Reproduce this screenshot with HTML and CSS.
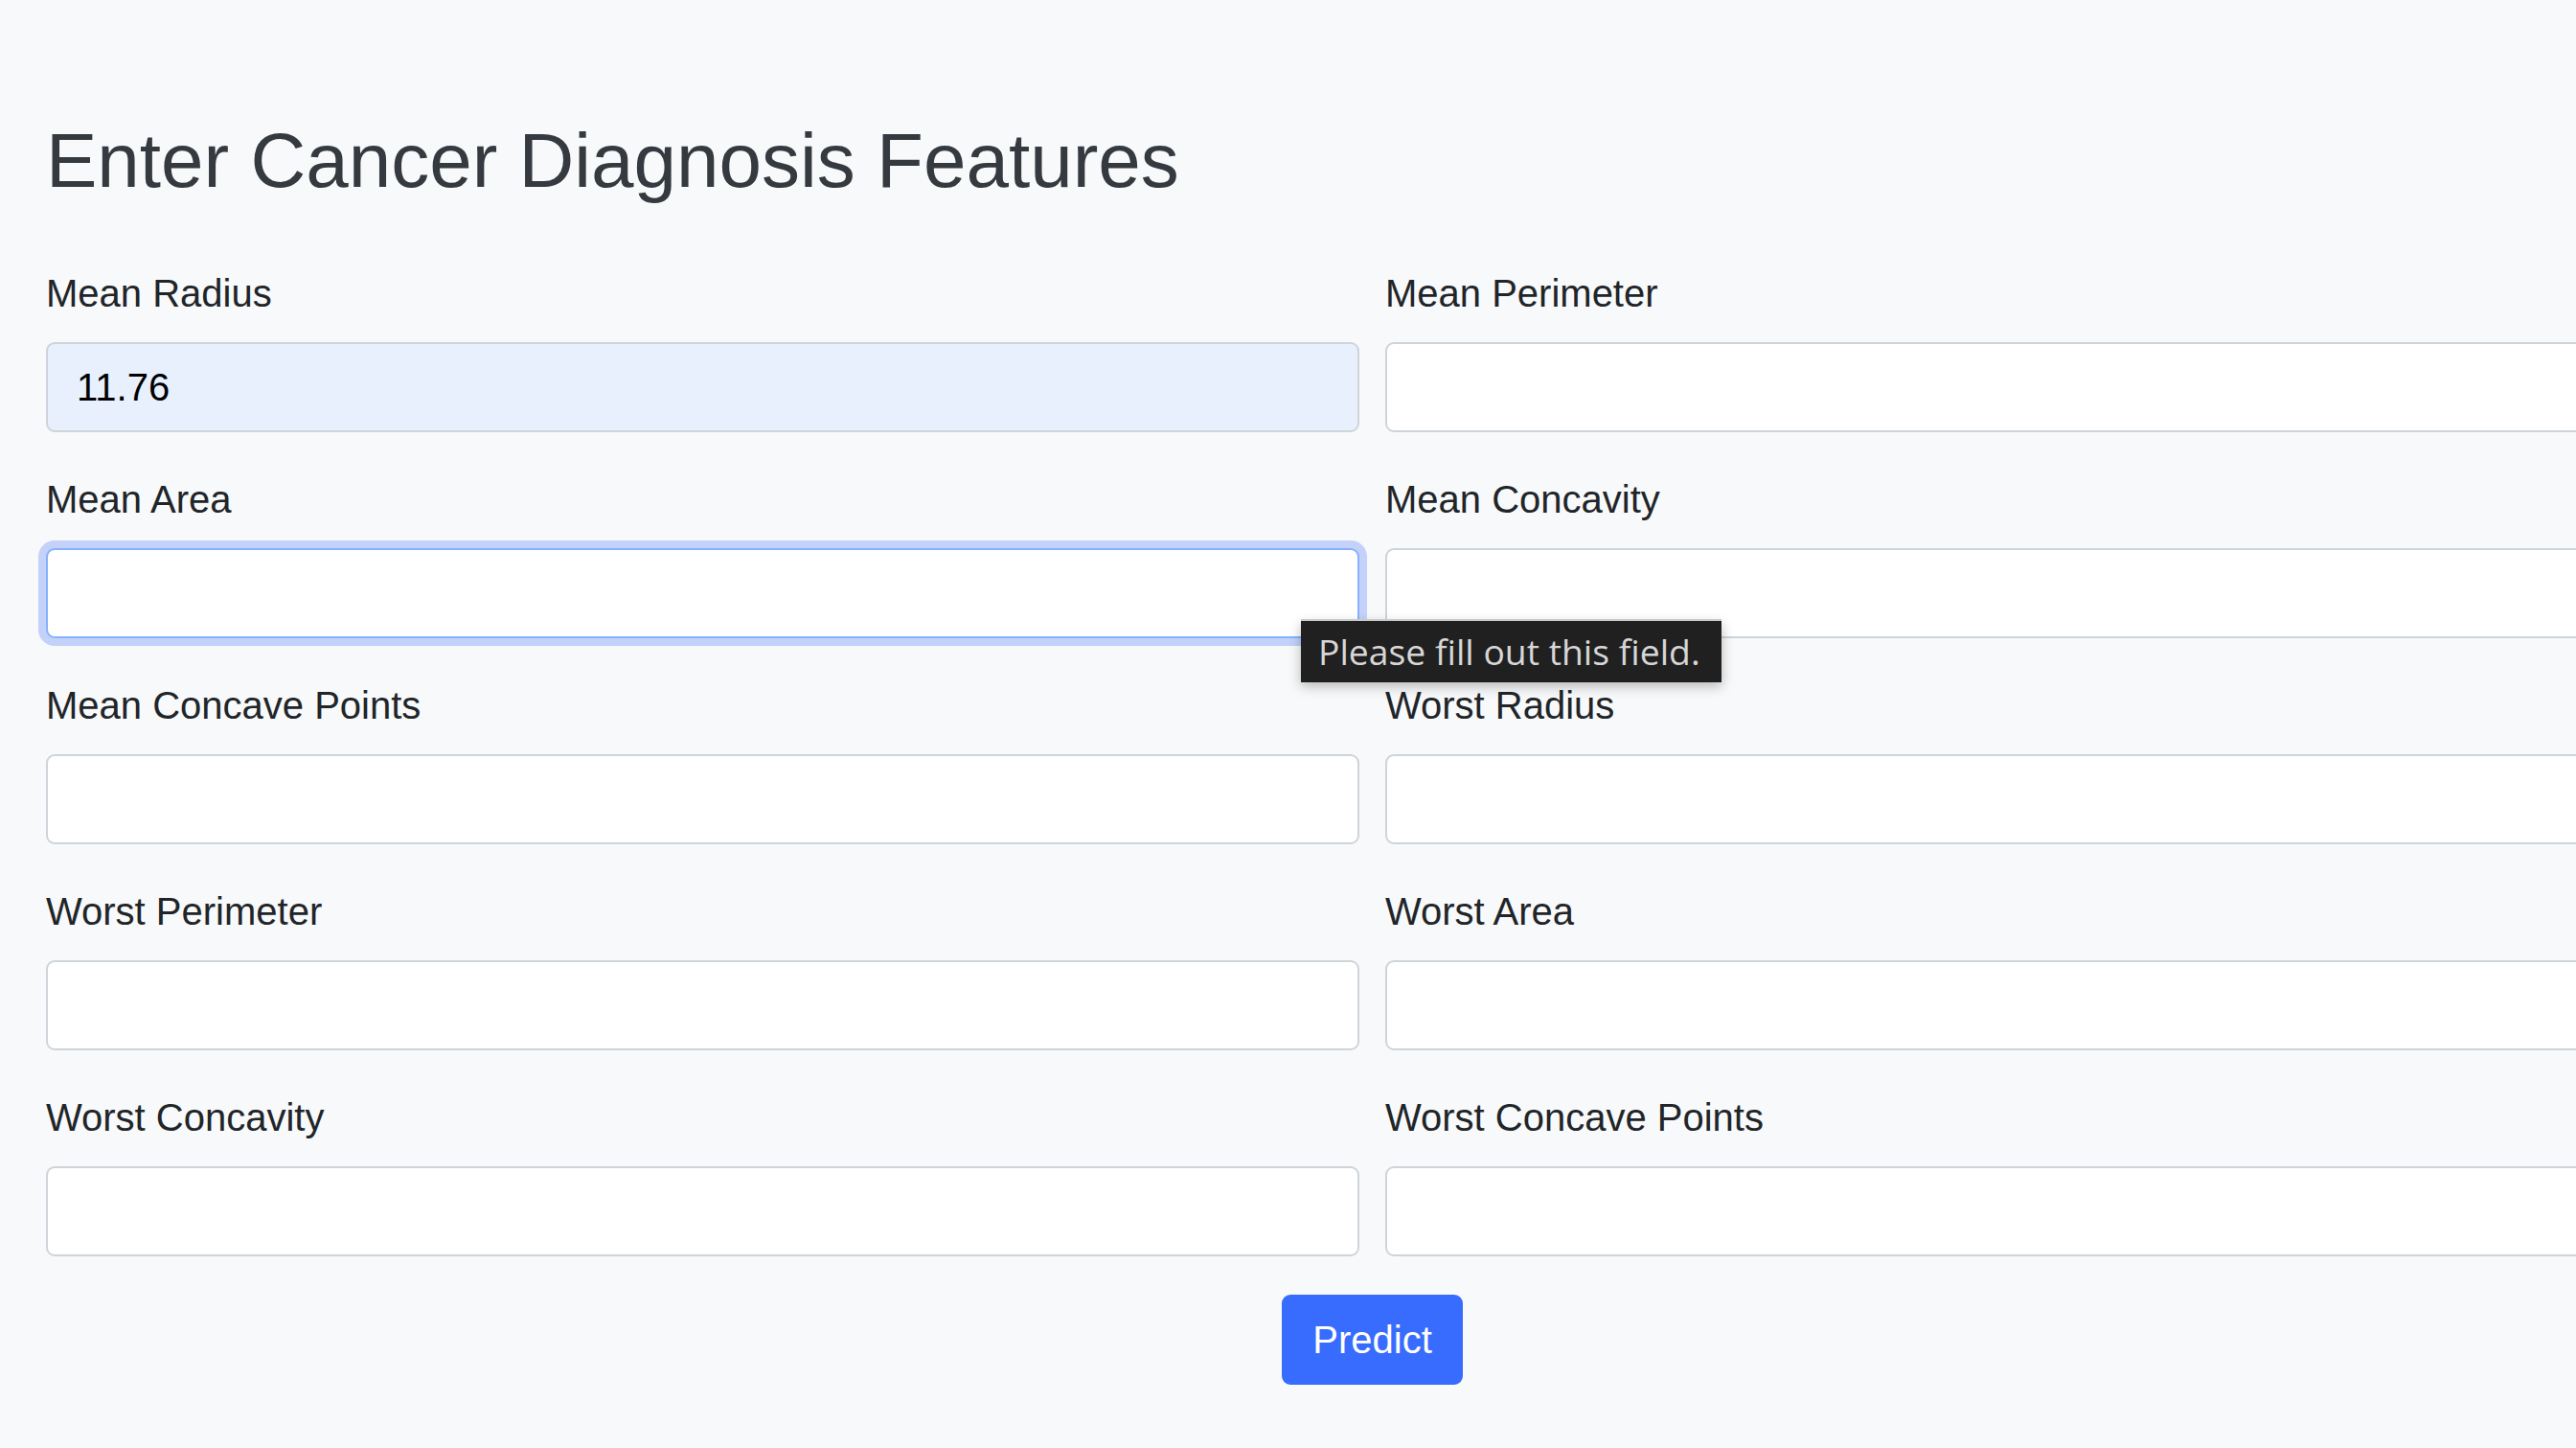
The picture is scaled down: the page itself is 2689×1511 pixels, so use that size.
FILE: index.html
```html
<!DOCTYPE html>
<html lang="en">
<head>
<meta charset="utf-8">
<title>Cancer Diagnosis</title>
<link rel="stylesheet" href="styles.css">
</head>
<body>
<main class="page">
  <h2 class="title">Enter Cancer Diagnosis Features</h2>
  <form class="form">
    <div class="grid">
      <div class="field">
        <label class="label" for="mean_radius">Mean Radius</label>
        <input class="input input-autofill" id="mean_radius" type="text" value="11.76">
      </div>
      <div class="field">
        <label class="label" for="mean_perimeter">Mean Perimeter</label>
        <input class="input" id="mean_perimeter" type="text">
      </div>
      <div class="field field-anchor">
        <label class="label" for="mean_area">Mean Area</label>
        <input class="input input-focus" id="mean_area" type="text">
        <div class="bubble">Please fill out this field.</div>
      </div>
      <div class="field">
        <label class="label" for="mean_concavity">Mean Concavity</label>
        <input class="input" id="mean_concavity" type="text">
      </div>
      <div class="field">
        <label class="label" for="mean_concave_points">Mean Concave Points</label>
        <input class="input" id="mean_concave_points" type="text">
      </div>
      <div class="field">
        <label class="label" for="worst_radius">Worst Radius</label>
        <input class="input" id="worst_radius" type="text">
      </div>
      <div class="field">
        <label class="label" for="worst_perimeter">Worst Perimeter</label>
        <input class="input" id="worst_perimeter" type="text">
      </div>
      <div class="field">
        <label class="label" for="worst_area">Worst Area</label>
        <input class="input" id="worst_area" type="text">
      </div>
      <div class="field">
        <label class="label" for="worst_concavity">Worst Concavity</label>
        <input class="input" id="worst_concavity" type="text">
      </div>
      <div class="field">
        <label class="label" for="worst_concave_points">Worst Concave Points</label>
        <input class="input" id="worst_concave_points" type="text">
      </div>
    </div>
    <div class="actions">
      <button class="btn" type="button">Predict</button>
    </div>
  </form>
</main>
</body>
</html>
```

FILE: styles.css
```css
html, body {
  margin: 0;
  padding: 0;
  background: #f8f9fa;
  overflow: hidden;
}

body {
  font-family: "Liberation Sans", Arial, sans-serif;
  color: #212529;
  width: 2689px;
  height: 1511px;
}

.page {
  padding: 120px 0 0 48px;
  width: 2769px;
}

.title {
  margin: 0 0 60px;
  font-size: 80px;
  line-height: 1.2;
  font-weight: 400;
  color: #343a40;
}

.grid {
  display: grid;
  grid-template-columns: 1371px 1371px;
  column-gap: 27px;
}

.field {
  margin-bottom: 40px;
}

.field-anchor {
  position: relative;
}

.label {
  display: block;
  font-size: 40px;
  line-height: 60px;
  margin-bottom: 21px;
  color: #212529;
}

.input {
  display: block;
  box-sizing: border-box;
  width: 100%;
  height: 94px;
  padding: 0 30px;
  font-family: "Liberation Sans", Arial, sans-serif;
  font-size: 40px;
  color: #495057;
  background: #ffffff;
  border: 2px solid #ced4da;
  border-radius: 9px;
  outline: none;
}

.input-autofill {
  background: #e8f0fe;
  color: #000000;
}

.input-focus {
  border-color: #86b2fd;
  box-shadow: 0 0 0 8px rgba(56, 108, 255, 0.28);
}

.bubble {
  position: absolute;
  left: 1310px;
  top: 157px;
  box-sizing: border-box;
  width: 439px;
  height: 64px;
  padding: 0 0 2px 18px;
  display: flex;
  align-items: center;
  background: #202020;
  color: #d6d6d6;
  font-family: "Open Sans", "Noto Sans", sans-serif;
  font-size: 37.3px;
  white-space: nowrap;
  box-shadow: 0 -2px 0 #c9c9c9, 0 4px 12px rgba(0, 0, 0, 0.28);
  z-index: 5;
}

.actions {
  display: flex;
  justify-content: center;
}

.btn {
  box-sizing: border-box;
  height: 94px;
  padding: 0 30px;
  font-family: "Liberation Sans", Arial, sans-serif;
  font-size: 40px;
  line-height: 60px;
  color: #ffffff;
  background: #386cff;
  border: 2px solid #386cff;
  border-radius: 9px;
  cursor: pointer;
}
```
